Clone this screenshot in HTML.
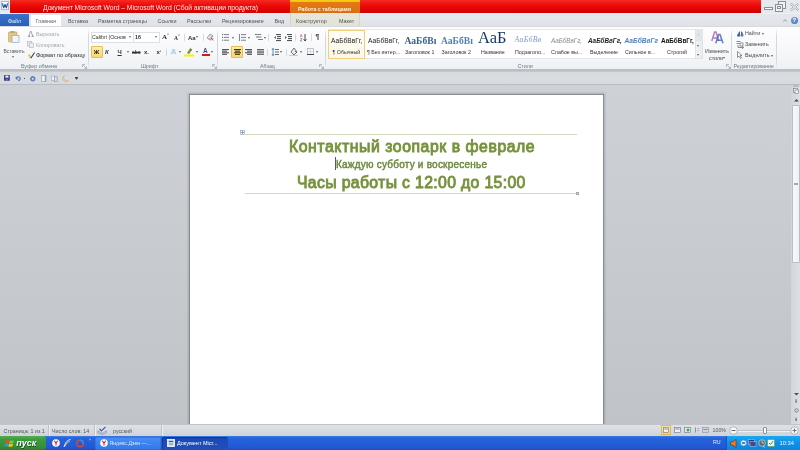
<!DOCTYPE html>
<html><head><meta charset="utf-8">
<style>
*{margin:0;padding:0;box-sizing:border-box}
html,body{width:800px;height:450px;overflow:hidden;background:#c9cdd3;font-family:"Liberation Sans",sans-serif;position:relative}
.a{position:absolute;white-space:nowrap}
.r{font-size:5.3px;color:#474747;line-height:7px}
.g{font-size:5.3px;color:#6d7682;line-height:7px}
.dis{color:#a5a9ae}
.tab{font-size:5.4px;color:#555;line-height:8px;top:16.5px}
.sep{position:absolute;width:1px;background:linear-gradient(rgba(200,205,212,0),#d3d8de 20%,#d3d8de 80%,rgba(200,205,212,0))}
.dd{font-size:4px;color:#666;line-height:6px}
svg{position:absolute;overflow:visible}
</style></head><body><div id="w" style="position:absolute;left:0;top:0;width:800px;height:450px;background:#c7cacf;will-change:transform">
<!-- ===== title bar ===== -->
<div class="a" style="left:0;top:0;width:800px;height:13px;background:#e6e9ed"></div>
<div class="a" style="left:10px;top:0;width:751px;height:13.5px;background:linear-gradient(#f62a22,#ec0a06 40%,#dc0202 75%,#c80000)"></div>
<div class="a" style="left:1px;top:1px;width:8px;height:9px;background:#f6f8fc;border:1px solid #a8bcd8"></div>
<svg style="left:2px;top:3px" width="6" height="5"><path d="M0.4 0.3L1.6 4.7L3 1.5L4.4 4.7L5.6 0.3" stroke="#1e5a9a" stroke-width="1.2" fill="none" stroke-linejoin="round"/></svg>
<div class="a" style="left:43px;top:2.5px;font-size:6.8px;color:#ffe6e6;line-height:9px;letter-spacing:-0.05px">Документ Microsoft Word&nbsp;–&nbsp;Microsoft Word (Сбой активации продукта)</div>
<!-- contextual tab -->
<div class="a" style="left:290px;top:0;width:70px;height:13px;background:linear-gradient(#f6d010 0,#f2c010 2px,#e27a16 2.5px,#dc6c10)"></div>
<div class="a" style="left:298px;top:5px;font-size:5.3px;font-weight:bold;color:#fff5dc;line-height:8px">Работа с таблицами</div>
<!-- window buttons -->
<div class="a" style="left:764px;top:7px;width:9px;height:3px;background:#fff;border:1px solid #8a9099"></div>
<div class="a" style="left:778px;top:1px;width:8px;height:8px;border:1px solid #8a9099;background:#f2f3f5"></div>
<div class="a" style="left:775px;top:4px;width:8px;height:8px;border:1px solid #8a9099;background:#f2f3f5"></div>
<div class="a" style="left:777px;top:6px;width:4px;height:3px;border:1px solid #8a9099"></div>
<svg style="left:790px;top:3px" width="9" height="8"><path d="M0.5 1.5L1.5 0.5L4.5 3L7.5 0.5L8.5 1.5L5.7 4L8.5 6.5L7.5 7.5L4.5 5L1.5 7.5L0.5 6.5L3.3 4Z" fill="#f8f8f8" stroke="#8a9099" stroke-width="0.7" stroke-linejoin="round"/></svg>
<!-- ===== tab row ===== -->
<div class="a" style="left:0;top:13px;width:800px;height:13px;background:linear-gradient(#f2f4f6,#e4e7eb 1.5px,#dfe3e8)"></div>
<div class="a" style="left:290px;top:13px;width:70px;height:13px;background:linear-gradient(#e6e6dc,#e2e2d6);border-left:1px solid #d8d6c0;border-right:1px solid #d8d6c0"></div>
<div class="a" style="left:0;top:14px;width:29px;height:12px;background:linear-gradient(#3a72cc,#2a5fb9)"></div>
<div class="a tab" style="left:8px;color:#e6efff">Файл</div>
<div class="a" style="left:29.5px;top:14px;width:32px;height:13px;background:linear-gradient(#fff,#fdfdfd);border:1px solid #e2e5e9;border-bottom:none"></div>
<div class="a tab" style="left:35.5px;color:#666">Главная</div>
<div class="a tab" style="left:68px">Вставка</div>
<div class="a tab" style="left:98px">Разметка страницы</div>
<div class="a tab" style="left:157.5px">Ссылки</div>
<div class="a tab" style="left:187px">Рассылки</div>
<div class="a tab" style="left:222px">Рецензирование</div>
<div class="a tab" style="left:274.5px">Вид</div>
<div class="a tab" style="left:296px">Конструктор</div>
<div class="a tab" style="left:339px">Макет</div>
<svg style="left:782.5px;top:18.5px" width="4" height="3"><path d="M0.3 2.5L2 0.7L3.7 2.5" stroke="#7a8088" stroke-width="0.8" fill="none"/></svg>
<div class="a" style="left:791px;top:16.5px;width:7px;height:7px;border-radius:50%;background:radial-gradient(circle at 40% 35%,#7aa6e0,#3a6bb8)"></div>
<div class="a" style="left:792.7px;top:16.8px;font-size:5.5px;font-weight:bold;color:#fff;line-height:7px">?</div>
<!-- ===== ribbon body ===== -->
<div class="a" style="left:0;top:26px;width:800px;height:44px;background:linear-gradient(#fdfdfe,#f7f8fa 55%,#eef1f4);border-top:1px solid #d6dae0;border-bottom:1px solid #b9bec6"></div>
<div class="sep" style="left:88px;top:28px;height:41px"></div>
<div class="sep" style="left:217px;top:28px;height:41px"></div>
<div class="sep" style="left:325px;top:28px;height:41px"></div>
<div class="sep" style="left:731px;top:28px;height:41px"></div>
<div class="sep" style="left:776px;top:28px;height:41px"></div>
<!-- group labels -->
<div class="a g" style="left:21px;top:62.5px">Буфер обмена</div>
<div class="a g" style="left:141px;top:62.5px">Шрифт</div>
<div class="a g" style="left:260px;top:62.5px">Абзац</div>
<div class="a g" style="left:517.5px;top:62.5px">Стили</div>
<div class="a g" style="left:733.5px;top:62.5px">Редактирование</div>
<!-- clipboard group -->
<svg style="left:8px;top:31px" width="12" height="12"><rect x="0.5" y="1" width="8.5" height="10" rx="0.8" fill="#e6c878" stroke="#c0a060" stroke-width="0.6"/><rect x="2.5" y="0" width="4" height="2" fill="#b0a890"/><rect x="4" y="4.5" width="7" height="7" fill="#f2f4f8" stroke="#98a8c4" stroke-width="0.7"/></svg>
<div class="a r" style="left:3.5px;top:47.5px;font-size:5px;color:#555">Вставить</div>
<div class="a dd" style="left:12px;top:54px">▾</div>
<svg style="left:28px;top:31px" width="6" height="6"><path d="M2.5 0L0.8 5.5M3 0L4.8 5.5" stroke="#a8acb2" stroke-width="1" fill="none"/><rect x="0" y="4.5" width="2" height="1.5" fill="#9a9ea4"/><rect x="3.6" y="4.5" width="2" height="1.5" fill="#9a9ea4"/></svg>
<div class="a r dis" style="left:36px;top:30.5px">Вырезать</div>
<svg style="left:27px;top:41px" width="7" height="7"><rect x="0.5" y="0.5" width="4" height="4.5" fill="#eef0f3" stroke="#b5b9bf" stroke-width="0.7"/><rect x="2.5" y="2" width="4" height="4.5" fill="#eef0f3" stroke="#b5b9bf" stroke-width="0.7"/></svg>
<div class="a r dis" style="left:36px;top:41.7px">Копировать</div>
<svg style="left:28px;top:51.5px" width="7" height="7"><path d="M0.8 2.5L2.8 6.5" stroke="#d8c070" stroke-width="1.8" fill="none"/><path d="M3 6L6.5 0.5" stroke="#3a3a30" stroke-width="1.1" fill="none"/></svg>
<div class="a r" style="left:36px;top:52px;color:#2a2a2a;font-size:5.5px">Формат по образцу</div>
<svg style="left:82px;top:64px" width="5" height="5"><path d="M0.5 0.5H3M0.5 0.5V3M1.5 1.5L4.5 4.5M4.5 2.5V4.5H2.5" stroke="#8a939e" stroke-width="0.6" fill="none"/></svg>
<!-- font group -->
<div class="a" style="left:90.5px;top:31.5px;width:43px;height:11px;background:#fff;border:1px solid #dde1e6"></div>
<div class="a" style="left:133px;top:31.5px;width:27px;height:11px;background:#fff;border:1px solid #dde1e6"></div>
<div class="a r" style="left:92px;top:33.5px;color:#333">Calibri (Основ</div>
<div class="a dd" style="left:128.5px;top:34px">▾</div>
<div class="a r" style="left:135px;top:33.5px;color:#333;font-weight:bold">16</div>
<div class="a dd" style="left:155px;top:34px">▾</div>
<div class="a" style="left:162px;top:33px;font-size:7px;font-family:'Liberation Serif';font-weight:bold;color:#333;line-height:8px">A</div>
<div class="a" style="left:167px;top:32px;font-size:3.5px;color:#555;line-height:4px">˄</div>
<div class="a" style="left:174px;top:34.5px;font-size:5.5px;font-family:'Liberation Serif';font-weight:bold;color:#333;line-height:7px">A</div>
<div class="a" style="left:178px;top:32.5px;font-size:3.5px;color:#555;line-height:4px">˅</div>
<div class="sep" style="left:184px;top:33px;height:9px"></div>
<div class="a" style="left:188px;top:33.5px;font-size:6px;font-weight:bold;color:#333;line-height:8px">Aa</div>
<div class="a dd" style="left:196px;top:34px">▾</div>
<div class="sep" style="left:203px;top:33px;height:9px"></div>
<svg style="left:206px;top:33px" width="8" height="8"><path d="M1 5L4 1L7 3L4 7Z" fill="#e3e7ee" stroke="#7c8694" stroke-width="0.7"/><path d="M3 6.5L7 2" stroke="#7c8694" stroke-width="0.6"/><path d="M5 5L7.5 7.5M7.5 5L5 7.5" stroke="#c03030" stroke-width="0.7"/></svg>
<!-- row 2 -->
<div class="a" style="left:91px;top:46px;width:11.5px;height:11.5px;background:linear-gradient(#fdeca0,#f9d870);border:1px solid #e2bf5a;border-radius:1px"></div>
<div class="a" style="left:93.8px;top:48.5px;font-size:6px;font-weight:bold;color:#222;line-height:7px">Ж</div>
<div class="a" style="left:105px;top:48.5px;font-size:6px;font-weight:bold;font-style:italic;color:#333;line-height:7px">К</div>
<div class="a" style="left:117.5px;top:48.5px;font-size:6px;font-weight:bold;color:#333;line-height:7px;text-decoration:underline">Ч</div>
<div class="a dd" style="left:126.5px;top:49px">▾</div>
<div class="a" style="left:132px;top:48.5px;font-size:5px;font-weight:bold;color:#333;line-height:7px;text-decoration:line-through">abc</div>
<div class="a" style="left:144px;top:48.5px;font-size:6px;font-weight:bold;color:#333;line-height:7px">x<span style="font-size:3.5px">₂</span></div>
<div class="a" style="left:156.5px;top:48.5px;font-size:6px;font-weight:bold;color:#333;line-height:7px">x<span style="font-size:3.5px;vertical-align:top">²</span></div>
<div class="sep" style="left:166px;top:48px;height:9px"></div>
<div class="a" style="left:171px;top:48px;font-size:7px;font-weight:bold;color:#c5d9f2;line-height:8px;text-shadow:0 0 1px #6f9fd8">A</div>
<div class="a dd" style="left:179px;top:49px">▾</div>
<svg style="left:184px;top:47px" width="10" height="10"><path d="M3 6L6 1.5L8 3L5 7Z" fill="#7a8a3a"/><path d="M6 1.5L8 3" stroke="#4b5a20" stroke-width="0.8"/><rect x="0" y="7.5" width="10" height="2" fill="#f6f200"/></svg>
<div class="a dd" style="left:196px;top:49px">▾</div>
<div class="a" style="left:203px;top:47px;font-size:6.5px;font-weight:bold;color:#3a4a8a;line-height:7px">A</div>
<div class="a" style="left:201.5px;top:54px;width:8px;height:2px;background:#d81818"></div>
<div class="a dd" style="left:211px;top:49px">▾</div>
<svg style="left:212px;top:64px" width="5" height="5"><path d="M0.5 0.5H3M0.5 0.5V3M1.5 1.5L4.5 4.5M4.5 2.5V4.5H2.5" stroke="#8a939e" stroke-width="0.6" fill="none"/></svg>
<!-- paragraph group -->
<svg style="left:222px;top:34px" width="7" height="7"><rect x="0" y="0" width="1.2" height="1.2" fill="#6a7a98"/><rect x="0" y="2.8" width="1.2" height="1.2" fill="#6a7a98"/><rect x="0" y="5.6" width="1.2" height="1.2" fill="#6a7a98"/><rect x="2" y="0.1" width="5" height="1" fill="#7a8088"/><rect x="2" y="2.9" width="5" height="1" fill="#7a8088"/><rect x="2" y="5.7" width="5" height="1" fill="#7a8088"/></svg>
<div class="a dd" style="left:231.5px;top:34.5px">▾</div>
<svg style="left:239px;top:34px" width="7" height="7"><rect x="0" y="0" width="1" height="7" fill="#7a8aa8"/><rect x="2" y="0.1" width="5" height="1" fill="#7a8088"/><rect x="2" y="2.9" width="5" height="1" fill="#7a8088"/><rect x="2" y="5.7" width="5" height="1" fill="#7a8088"/></svg>
<div class="a dd" style="left:247.5px;top:34.5px">▾</div>
<svg style="left:255px;top:34px" width="8" height="8"><rect x="0" y="0" width="6" height="1" fill="#7a8088"/><rect x="1.5" y="2.5" width="5" height="1" fill="#7a8088"/><rect x="3" y="5" width="5" height="1" fill="#7a8088"/><rect x="0" y="0" width="1" height="1" fill="#3f6db0"/><rect x="1.5" y="2.5" width="1" height="1" fill="#3f6db0"/></svg>
<div class="a dd" style="left:263.5px;top:34.5px">▾</div>
<div class="sep" style="left:268px;top:33px;height:9px"></div>
<svg style="left:274px;top:34px" width="7" height="7"><rect x="2" y="0" width="5" height="1.1" fill="#555"/><rect x="3" y="2" width="4" height="1.1" fill="#555"/><rect x="3" y="4" width="4" height="1.1" fill="#555"/><rect x="2" y="6" width="5" height="1.1" fill="#555"/><path d="M2 2L0 3.5L2 5Z" fill="#3f6db0"/></svg>
<svg style="left:285px;top:34px" width="7" height="7"><rect x="2" y="0" width="5" height="1.1" fill="#555"/><rect x="3" y="2" width="4" height="1.1" fill="#555"/><rect x="3" y="4" width="4" height="1.1" fill="#555"/><rect x="2" y="6" width="5" height="1.1" fill="#555"/><path d="M0 2L2 3.5L0 5Z" fill="#3f6db0"/></svg>
<div class="sep" style="left:295px;top:33px;height:9px"></div>
<svg style="left:300px;top:33.5px" width="7" height="8"><path d="M0.3 3L1.2 0.3L2.1 3" stroke="#b06a6a" stroke-width="0.7" fill="none"/><path d="M0.3 4.3H2.1L0.3 7H2.1" stroke="#6a6aa0" stroke-width="0.7" fill="none"/><path d="M5 0V6.5M3.6 5.2L5 7L6.4 5.2" stroke="#333" stroke-width="0.9" fill="none"/></svg>
<div class="sep" style="left:311px;top:33px;height:9px"></div>
<div class="a" style="left:315.5px;top:33px;font-size:7px;font-weight:bold;color:#444;line-height:8px">¶</div>
<!-- row 2 -->
<svg style="left:222px;top:49px" width="7" height="6"><rect x="0" y="0" width="7" height="1.1" fill="#555"/><rect x="0" y="1.6" width="5" height="1.1" fill="#555"/><rect x="0" y="3.2" width="7" height="1.1" fill="#555"/><rect x="0" y="4.8" width="5" height="1.1" fill="#555"/></svg>
<div class="a" style="left:231px;top:46px;width:11.5px;height:11.5px;background:linear-gradient(#fdeca0,#f9d870);border:1px solid #e2bf5a;border-radius:1px"></div>
<svg style="left:233.5px;top:49px" width="7" height="6"><rect x="0" y="0" width="7" height="1.1" fill="#4a3a10"/><rect x="1" y="1.6" width="5" height="1.1" fill="#4a3a10"/><rect x="0" y="3.2" width="7" height="1.1" fill="#4a3a10"/><rect x="1" y="4.8" width="5" height="1.1" fill="#4a3a10"/></svg>
<svg style="left:245px;top:49px" width="7" height="6"><rect x="0" y="0" width="7" height="1.1" fill="#555"/><rect x="2" y="1.6" width="5" height="1.1" fill="#555"/><rect x="0" y="3.2" width="7" height="1.1" fill="#555"/><rect x="2" y="4.8" width="5" height="1.1" fill="#555"/></svg>
<svg style="left:257px;top:49px" width="7" height="6"><rect x="0" y="0" width="7" height="1.1" fill="#666"/><rect x="0" y="1.6" width="7" height="1.1" fill="#666"/><rect x="0" y="3.2" width="7" height="1.1" fill="#666"/><rect x="0" y="4.8" width="7" height="1.1" fill="#666"/></svg>
<div class="sep" style="left:267px;top:48px;height:9px"></div>
<svg style="left:272px;top:48px" width="7" height="8"><path d="M1 0.5V7.5M0 1.8L1 0.3L2 1.8M0 6.2L1 7.7L2 6.2" stroke="#3f6db0" stroke-width="0.8" fill="none"/><rect x="3" y="1" width="4" height="1" fill="#666"/><rect x="3" y="3.5" width="4" height="1" fill="#666"/><rect x="3" y="6" width="4" height="1" fill="#666"/></svg>
<div class="a dd" style="left:280px;top:49px">▾</div>
<div class="sep" style="left:286px;top:48px;height:9px"></div>
<svg style="left:289px;top:47px" width="9" height="9"><path d="M2 5L5 1L8 5L5 8Z" fill="#e8ecf2" stroke="#555" stroke-width="0.8"/><path d="M6 4L8 6" stroke="#555" stroke-width="0.8"/><rect x="0" y="8" width="9" height="1" fill="#c8ccd0"/></svg>
<div class="a dd" style="left:300px;top:49px">▾</div>
<svg style="left:307px;top:48px" width="7" height="7"><rect x="0.5" y="0.5" width="6" height="6" fill="none" stroke="#a8adb4" stroke-width="0.7"/><path d="M3.5 0.5V6.5M0.5 3.5H6.5" stroke="#c0c4ca" stroke-width="0.5"/><rect x="0" y="6" width="7" height="1" fill="#444"/></svg>
<div class="a dd" style="left:316px;top:49px">▾</div>
<svg style="left:319px;top:64px" width="5" height="5"><path d="M0.5 0.5H3M0.5 0.5V3M1.5 1.5L4.5 4.5M4.5 2.5V4.5H2.5" stroke="#8a939e" stroke-width="0.6" fill="none"/></svg>
<!-- styles gallery -->
<div class="a" style="left:327.5px;top:28.5px;width:368px;height:30.5px;background:#fff;border:1px solid #e4e7eb"></div>
<div class="a" style="left:328px;top:30px;width:37px;height:28.5px;background:linear-gradient(#fffef8,#fdf8e6);border:1px solid #f0cf78"></div>
<div class="a" style="left:331px;top:37px;font-size:6.6px;color:#222;line-height:7px">АаБбВвГг,</div>
<div class="a r" style="left:332.5px;top:49px;color:#333">¶ Обычный</div>
<div class="a" style="left:368px;top:37px;font-size:6.6px;color:#222;line-height:7px">АаБбВвГг,</div>
<div class="a r" style="left:367px;top:49px;color:#333">¶ Без интер...</div>
<div class="a" style="left:404.5px;top:35.7px;font-size:9.6px;font-family:'Liberation Serif';font-weight:bold;color:#365f91;line-height:9px">АаБбВı</div>
<div class="a r" style="left:405px;top:49px;color:#333">Заголовок 1</div>
<div class="a" style="left:441px;top:35.7px;font-size:9.6px;font-family:'Liberation Serif';font-weight:bold;color:#4f81bd;line-height:9px">АаБбВı</div>
<div class="a r" style="left:441.5px;top:49px;color:#333">Заголовок 2</div>
<div class="a" style="left:478px;top:31px;font-size:16.5px;font-family:'Liberation Serif';color:#17365d;line-height:14px">АаБ</div>
<div class="a r" style="left:481px;top:49px;color:#333">Название</div>
<div class="a" style="left:514.5px;top:36px;font-size:7.8px;font-family:'Liberation Serif';font-style:italic;color:#7f9bc4;line-height:8px;letter-spacing:0.3px">АаБбВв</div>
<div class="a r" style="left:515px;top:49px;color:#333">Подзаголо...</div>
<div class="a" style="left:551px;top:37px;font-size:6.3px;font-style:italic;color:#8a8a8a;line-height:7px">АаБбВвГг,</div>
<div class="a r" style="left:551px;top:49px;color:#333">Слабое вы...</div>
<div class="a" style="left:588px;top:37px;font-size:6.3px;font-style:italic;font-weight:bold;color:#222;line-height:7px">АаБбВвГг,</div>
<div class="a r" style="left:590px;top:49px;color:#333">Выделение</div>
<div class="a" style="left:624.5px;top:37px;font-size:6.6px;font-style:italic;font-weight:bold;color:#4f81bd;line-height:7px">АаБбВвГг</div>
<div class="a r" style="left:625px;top:49px;color:#333">Сильное в...</div>
<div class="a" style="left:661px;top:37px;font-size:6.4px;font-weight:bold;color:#111;line-height:7px">АаБбВвГг,</div>
<div class="a r" style="left:667px;top:49px;color:#333">Строгий</div>
<div class="a" style="left:695px;top:28.5px;width:8px;height:30.5px;background:linear-gradient(90deg,#f2f4f6,#e9ecef);border:1px solid #dfe2e6"></div><div class="a" style="left:695.5px;top:29px;width:7px;height:12px;background:#e2e5e9"></div>
<div class="a" style="left:695px;top:41px;width:8px;height:1px;background:#e9ecef"></div>
<div class="a" style="left:695px;top:50px;width:8px;height:1px;background:#e9ecef"></div>
<div class="a" style="left:697px;top:31.5px;font-size:5px;color:#c0c4c9;line-height:6px">˄</div>
<div class="a" style="left:697.2px;top:42.5px;font-size:4px;color:#666;line-height:6px">▾</div>
<div class="a" style="left:697.2px;top:51.5px;font-size:4px;color:#666;line-height:6px">▾</div>
<!-- change styles -->
<svg style="left:710.5px;top:31px" width="13" height="13"><path d="M0.8 10L3.6 1H5L7.8 10M2 7H6.6" stroke="#a868b0" stroke-width="1.5" fill="none" opacity="0.85"/><path d="M4.8 12.2L7.6 3.5H9L12 12.2M6 9.3H10.8" stroke="#4a6cb8" stroke-width="1.6" fill="none" opacity="0.85"/></svg>
<div class="a r" style="left:705px;top:47.5px">Изменить</div>
<div class="a r" style="left:709px;top:54.5px">стили</div>
<div class="a dd" style="left:723px;top:55px">▾</div>
<svg style="left:726px;top:64px" width="5" height="5"><path d="M0.5 0.5H3M0.5 0.5V3M1.5 1.5L4.5 4.5M4.5 2.5V4.5H2.5" stroke="#8a939e" stroke-width="0.6" fill="none"/></svg>
<!-- editing -->
<svg style="left:737px;top:31px" width="7" height="6"><circle cx="1.6" cy="4.2" r="1.5" fill="#4a68a0"/><circle cx="5" cy="4.2" r="1.5" fill="#6a88c0"/><path d="M1 3.5L2 0.5H2.8L3 3.5M4 3.5L4.2 0.5H5L6 3.5" fill="#3a5090"/></svg>
<div class="a r" style="left:745px;top:30px">Найти</div>
<div class="a dd" style="left:761.5px;top:30.5px">▾</div>
<svg style="left:736px;top:40.5px" width="8" height="7"><path d="M0.5 0.5H4.5M0.5 2.5H3.5M2 4V6.5H7.5" stroke="#6a7078" stroke-width="0.8" fill="none"/><path d="M6 5L7.5 6.5L6 8" stroke="#3a9a3a" stroke-width="0.8" fill="none"/><rect x="4" y="2" width="3" height="3" fill="none" stroke="#6a7078" stroke-width="0.7"/></svg>
<div class="a r" style="left:745px;top:41px">Заменить</div>
<svg style="left:737px;top:51px" width="6" height="8"><path d="M0.5 0.5V6.5L2 5L3.5 7.5L4.5 7L3 4.5H5Z" fill="#fff" stroke="#555" stroke-width="0.6"/></svg>
<div class="a r" style="left:745px;top:52px">Выделить</div>
<div class="a dd" style="left:771px;top:52.5px">▾</div>
<!-- ===== QAT ===== -->
<div class="a" style="left:0;top:70px;width:800px;height:15px;background:linear-gradient(#b9bdc3 0,#c3c7cc 1.5px,#d6d9de 2.5px,#d9dce1 60%,#d6d9de);border-bottom:1px solid #babec4"></div>
<svg style="left:3.5px;top:75px" width="6" height="6"><rect x="0" y="0" width="5.8" height="5.8" rx="0.4" fill="#3a3c88"/><rect x="1.3" y="0.6" width="3.2" height="2" fill="#f0f2fa"/><rect x="1.8" y="3.8" width="2.2" height="2" fill="#6a70b0"/></svg>
<svg style="left:14.5px;top:75.5px" width="5" height="5"><path d="M1.2 0.8V3H3.4" stroke="#4a70c0" stroke-width="1" fill="none"/><path d="M1.4 2.8A1.9 1.9 0 1 1 3.2 4.6" stroke="#4a70c0" stroke-width="1.1" fill="none"/></svg>
<div class="a" style="left:23.5px;top:77.8px;width:1.6px;height:1.6px;background:#222;border-radius:50%"></div>
<svg style="left:30px;top:75.5px" width="6" height="6"><circle cx="2.8" cy="2.8" r="2.3" fill="#6a8cc8" stroke="#4a68a8" stroke-width="0.7"/><circle cx="2.8" cy="2.8" r="0.9" fill="#e4ecf8"/></svg>
<svg style="left:41px;top:74.5px" width="6" height="7"><rect x="0.5" y="0.5" width="4.5" height="6" fill="#eef1f6" stroke="#98a4b8" stroke-width="0.7"/><rect x="3.8" y="0.5" width="1.3" height="6" fill="#98a4b8"/></svg>
<svg style="left:51px;top:74.5px" width="7" height="7"><rect x="0.5" y="1" width="3.2" height="4.5" fill="#f0f2f6" stroke="#98a4b8" stroke-width="0.6"/><rect x="3.3" y="1.8" width="2.8" height="4.8" fill="#e2e7ee" stroke="#7a88a0" stroke-width="0.6"/></svg>
<svg style="left:61.5px;top:74.5px" width="7" height="7"><path d="M2.6 0.5A3.2 3.2 0 1 0 6.6 5A2.8 2.8 0 0 1 2.6 0.5Z" fill="#ecd2a0" stroke="#d0a868" stroke-width="0.5"/></svg>
<div class="a" style="left:75px;top:76.5px;width:3px;height:0.8px;background:#444"></div>
<svg style="left:75px;top:78px" width="4" height="3"><path d="M0 0H3L1.5 1.8Z" fill="#444"/></svg>
<div class="a" style="left:0;top:85px;width:800px;height:339px;background:linear-gradient(#ced1d7,#c8cbd0 45%,#c0c3c8)"></div>
<!-- ===== page ===== -->
<div class="a" style="left:189.5px;top:95px;width:413.5px;height:330px;background:#fff;box-shadow:0 0 0 1px rgba(110,114,120,.55),0 0 2px 2px rgba(90,94,100,.3)"></div>
<!-- doc content -->
<svg style="left:239.5px;top:129.5px" width="5" height="5"><rect x="0.5" y="0.5" width="4" height="4" fill="#fff" stroke="#8a9ab8" stroke-width="0.6"/><path d="M2.5 1V4M1 2.5H4" stroke="#5a6a98" stroke-width="0.6"/></svg>
<div class="a" style="left:244.5px;top:133.5px;width:332.5px;height:1px;background:#d0dabd"></div>
<div class="a" style="left:244.5px;top:192.5px;width:332.5px;height:1px;background:#d0dabd"></div>
<div class="a" style="left:576px;top:192px;width:3px;height:3px;border:0.6px solid #9aa4b0;background:#fff"></div>
<div class="a" style="left:289px;top:138px;font-size:15.8px;font-weight:normal;color:#76923c;line-height:18px;letter-spacing:0.55px;-webkit-text-stroke:0.85px #76923c">Контактный зоопарк в феврале</div>
<div class="a" style="left:336px;top:159.2px;font-size:10px;font-weight:normal;color:#6a873a;line-height:12px;letter-spacing:0.22px;-webkit-text-stroke:0.42px #6a873a">Каждую субботу и воскресенье</div>
<div class="a" style="left:334.5px;top:157px;width:1.4px;height:13px;background:#555b6a"></div>
<div class="a" style="left:297px;top:173.8px;font-size:15.8px;font-weight:normal;color:#76923c;line-height:18px;letter-spacing:0.34px;-webkit-text-stroke:0.85px #76923c">Часы работы с 12:00 до 15:00</div>
<!-- scrollbar -->
<div class="a" style="left:791px;top:85px;width:9px;height:339px;background:linear-gradient(90deg,#d2d5da,#dcdfe3)"></div>
<div class="a" style="left:793px;top:85px;width:6px;height:1.5px;background:#b8bdc4"></div>
<svg style="left:793px;top:88px" width="6" height="6"><rect x="0.5" y="0.5" width="4" height="4" fill="#f2f4f7" stroke="#707880" stroke-width="0.6"/><rect x="2" y="2" width="3.5" height="3.5" fill="#f2f4f7" stroke="#707880" stroke-width="0.6"/></svg>
<svg style="left:793.5px;top:98.8px" width="5" height="3"><path d="M0 2.5L2.5 0L5 2.5Z" fill="#4a4e55"/></svg>
<div class="a" style="left:792px;top:105px;width:8px;height:158px;background:linear-gradient(90deg,#f8f9fb,#eef1f5);border:1px solid #b9bec6;border-radius:1px"></div>
<div class="a" style="left:794px;top:183px;width:4px;height:2px;border-top:0.6px solid #9aa;border-bottom:0.6px solid #9aa"></div>
<svg style="left:793.5px;top:392.8px" width="5" height="3"><path d="M0 0L2.5 2.5L5 0Z" fill="#4a4e55"/></svg>
<div class="a" style="left:793.5px;top:398px;font-size:5px;color:#555;line-height:6px">⇞</div>
<svg style="left:793.5px;top:408px" width="5" height="5"><circle cx="2.5" cy="2.5" r="1.7" fill="none" stroke="#666" stroke-width="0.7"/></svg>
<div class="a" style="left:793.5px;top:415.5px;font-size:5px;color:#555;line-height:6px">⇟</div>
<!-- ===== status ===== -->
<div class="a" style="left:0;top:424px;width:800px;height:12px;background:linear-gradient(#dfe2e6,#cfd3d9);border-top:1px solid #c1c5cb"></div>
<div class="a r" style="left:3.6px;top:427.5px;color:#555">Страница: 1 из 1</div>
<div class="a" style="left:48px;top:425px;width:1px;height:11px;background:#bfc3c9;box-shadow:1px 0 0 #eef0f2"></div>
<div class="a r" style="left:52px;top:427.5px;color:#555">Число слов: 14</div>
<div class="a" style="left:93.5px;top:425px;width:1px;height:11px;background:#bfc3c9;box-shadow:1px 0 0 #eef0f2"></div>
<svg style="left:97px;top:425.5px" width="10" height="9"><path d="M0.5 5L5 7.5L9.5 5V7L5 8.8L0.5 7Z" fill="#c8d0dc" stroke="#7a8698" stroke-width="0.5"/><path d="M1 4.5L5 6.5L9 4.5" fill="#f4f6fa" stroke="#9aa4b4" stroke-width="0.5"/><path d="M2.5 3L4.5 5L8.5 0.8" stroke="#3a5a98" stroke-width="1.1" fill="none"/></svg>
<div class="a r" style="left:113px;top:427.5px;color:#555">русский</div>
<div class="a" style="left:161px;top:425px;width:1px;height:11px;background:#bfc3c9;box-shadow:1px 0 0 #eef0f2"></div>
<!-- view buttons -->
<div class="a" style="left:661px;top:425px;width:10px;height:10px;background:linear-gradient(#fdeaa0,#f8d270);border:1px solid #e2b850"></div>
<svg style="left:663px;top:427px" width="6" height="6"><rect x="0.5" y="0.5" width="5" height="5" fill="#eef0f4" stroke="#6a7488" stroke-width="0.6"/><rect x="1.5" y="1.5" width="3" height="1" fill="#7a8aa8"/></svg>
<svg style="left:674px;top:427px" width="7" height="6"><rect x="0.5" y="0.5" width="6" height="5" fill="#eef0f4" stroke="#6a7488" stroke-width="0.6"/><rect x="1.5" y="1.5" width="4" height="1" fill="#7a8aa8"/></svg>
<svg style="left:684px;top:427px" width="7" height="6"><rect x="0.5" y="0.5" width="6" height="5" fill="#e2ede2" stroke="#6a7488" stroke-width="0.6"/><circle cx="4" cy="3" r="1.5" fill="#4a9a6a"/></svg>
<svg style="left:693.5px;top:427px" width="6" height="6"><rect x="1" y="0.5" width="1" height="5" fill="#8a929e"/><rect x="3" y="1" width="2.5" height="1" fill="#aab0b8"/><rect x="3" y="3" width="2.5" height="1" fill="#aab0b8"/></svg>
<svg style="left:702px;top:427px" width="7" height="6"><rect x="0.5" y="0.5" width="6" height="5" fill="#d0d4da" stroke="#8a929e" stroke-width="0.6"/><rect x="1.5" y="2" width="4" height="1" fill="#8a929e"/></svg>
<div class="a r" style="left:712.5px;top:427px;color:#555">100%</div>
<svg style="left:729px;top:425.5px" width="9" height="9"><circle cx="4.5" cy="4.5" r="3.8" fill="#f6f7f9" stroke="#9aa2ac" stroke-width="0.7"/><rect x="2.5" y="4" width="4" height="1" fill="#666"/></svg>
<div class="a" style="left:738px;top:429.5px;width:52px;height:1px;background:#c2c6cc;box-shadow:0 1px 0 #eef0f2"></div>
<div class="a" style="left:763px;top:426.5px;width:3.5px;height:7px;background:#fbfcfd;border:0.7px solid #8a929c;border-radius:1px"></div>
<svg style="left:790px;top:425.5px" width="9" height="9"><circle cx="4.5" cy="4.5" r="3.8" fill="#f6f7f9" stroke="#9aa2ac" stroke-width="0.7"/><path d="M2.5 4.5H6.5M4.5 2.5V6.5" stroke="#666" stroke-width="0.9"/></svg>
<!-- ===== taskbar ===== -->
<div class="a" style="left:0;top:436px;width:800px;height:14px;background:linear-gradient(#3a7ae6,#2563dc 15%,#2158d2 85%,#1b4cc0)"></div>
<div class="a" style="left:0;top:436px;width:46px;height:14px;background:linear-gradient(#52ae52,#3c9c3c 25%,#34903a 75%,#2c7e30);border-radius:0 3px 3px 0"></div>
<svg style="left:5px;top:438.5px" width="9" height="9"><path d="M0.5 1.5Q2.5 0.5 4.2 1.3L3.6 4Q2 3.3 0 4.2Z" fill="#f24b20"/><path d="M4.8 1.5Q6.5 2.3 8.8 1.2L8.2 3.9Q6 5 4.2 4.2Z" fill="#7ec83a"/><path d="M0 4.8Q2 4 3.5 4.6L3 7.5Q1.5 6.7 -0.5 7.6Z" fill="#2a9af0"/><path d="M4 4.8Q6 5.6 8 4.5L7.5 7.3Q5.5 8.3 3.4 7.5Z" fill="#fbc21a"/></svg>
<div class="a" style="left:16.3px;top:437.5px;font-size:9px;font-weight:bold;font-style:italic;color:#fff;line-height:11px;text-shadow:0.5px 0.5px 0.5px #1a4a1a">пуск</div>
<svg style="left:52px;top:439px" width="8" height="8"><circle cx="4" cy="4" r="3.8" fill="#fff"/><path d="M2.3 1.8L4 4.3L5.7 1.8M4 4.3V6.6" stroke="#e02020" stroke-width="1.1" fill="none"/></svg>
<svg style="left:63px;top:438.5px" width="8" height="9"><path d="M1 8Q3 1 7.5 0.5" stroke="#e8f0ff" stroke-width="1" fill="none"/><path d="M2 7Q4 3 7 2" stroke="#f6d04a" stroke-width="0.8" fill="none"/></svg>
<svg style="left:75.5px;top:438.5px" width="8" height="9"><circle cx="4" cy="4.5" r="3.3" fill="none" stroke="#e04a2a" stroke-width="1.4"/><path d="M4 1.2A3.3 3.3 0 0 1 7.3 4.5" stroke="#3a8ae8" stroke-width="1.4" fill="none"/></svg>
<div class="a" style="left:89px;top:437px;font-size:4px;color:#c8d8f8;line-height:5px">»</div>
<div class="a" style="left:95px;top:437px;width:66px;height:12.5px;background:linear-gradient(#4a90f4,#3a82ef 50%,#3278e8);border-radius:2px;box-shadow:inset 0 0 0 0.5px #2a62c8"></div>
<svg style="left:100px;top:439px" width="8" height="8"><circle cx="4" cy="4" r="3.8" fill="#fff"/><path d="M2.3 1.8L4 4.3L5.7 1.8M4 4.3V6.6" stroke="#e02020" stroke-width="1.1" fill="none"/></svg>
<div class="a" style="left:109.5px;top:439.5px;font-size:5.2px;color:#dce8ff;line-height:7px">Яндекс.Дзен —...</div>
<div class="a" style="left:162px;top:437px;width:66px;height:12.5px;background:linear-gradient(#1a48b0,#1e4cb8 50%,#2050bc);border-radius:2px;box-shadow:inset 1px 1px 1px rgba(0,0,0,.25)"></div>
<svg style="left:167px;top:439px" width="8" height="8"><rect x="0.5" y="0.5" width="7" height="7" fill="#dbe6f8" stroke="#fff" stroke-width="0.8"/><rect x="1.8" y="1.8" width="4.4" height="1.2" fill="#2a5ab8"/><rect x="1.8" y="3.6" width="4.4" height="2.6" fill="#9ab4e0"/></svg>
<div class="a" style="left:177px;top:439.5px;font-size:5.5px;color:#fff;line-height:7px">Документ Micr...</div>
<div class="a" style="left:713px;top:439px;font-size:5.3px;color:#e0ecff;line-height:7px">RU</div>
<div class="a" style="left:726px;top:436px;width:74px;height:14px;background:linear-gradient(#18a8f0,#1090e8 50%,#0c86e0);border-left:1px solid #0b5cc0"></div>
<svg style="left:730px;top:438.5px" width="8" height="9"><path d="M0.5 3H2.5L6 0.5V8.5L2.5 6H0.5Z" fill="#f07a30" stroke="#602000" stroke-width="0.5"/></svg>
<svg style="left:740px;top:439px" width="7" height="8"><circle cx="3.5" cy="4" r="3" fill="#e8f4ff" stroke="#4a90d8" stroke-width="0.8"/><rect x="2" y="3" width="3" height="2" fill="#3a8ad8"/></svg>
<svg style="left:747.5px;top:438.5px" width="8" height="8"><rect x="0.5" y="0.5" width="6" height="5" fill="#2a3a7a" stroke="#c8d0e8" stroke-width="0.5"/><rect x="2" y="2.5" width="6" height="5" fill="#3a4a9a" stroke="#c8d0e8" stroke-width="0.5"/></svg>
<svg style="left:757.5px;top:438.5px" width="8" height="9"><circle cx="4" cy="4" r="3.3" fill="#606878" stroke="#d0d4dc" stroke-width="0.7"/><path d="M4 1.5V4H6" stroke="#f0e060" stroke-width="0.8" fill="none"/><path d="M5 7L7 8.5" stroke="#e8e8e8" stroke-width="0.7"/></svg>
<svg style="left:766.5px;top:438.5px" width="8" height="8"><rect x="0.5" y="0.5" width="7" height="7" rx="1" fill="#f4f8f4" stroke="#5aa05a" stroke-width="0.7"/><path d="M2 4L3.5 5.5L6 2" stroke="#3a9a3a" stroke-width="1" fill="none"/></svg>
<div class="a" style="left:779.5px;top:439.5px;font-size:5.8px;color:#f0f6ff;line-height:7px">10:34</div>
</div></body></html>
